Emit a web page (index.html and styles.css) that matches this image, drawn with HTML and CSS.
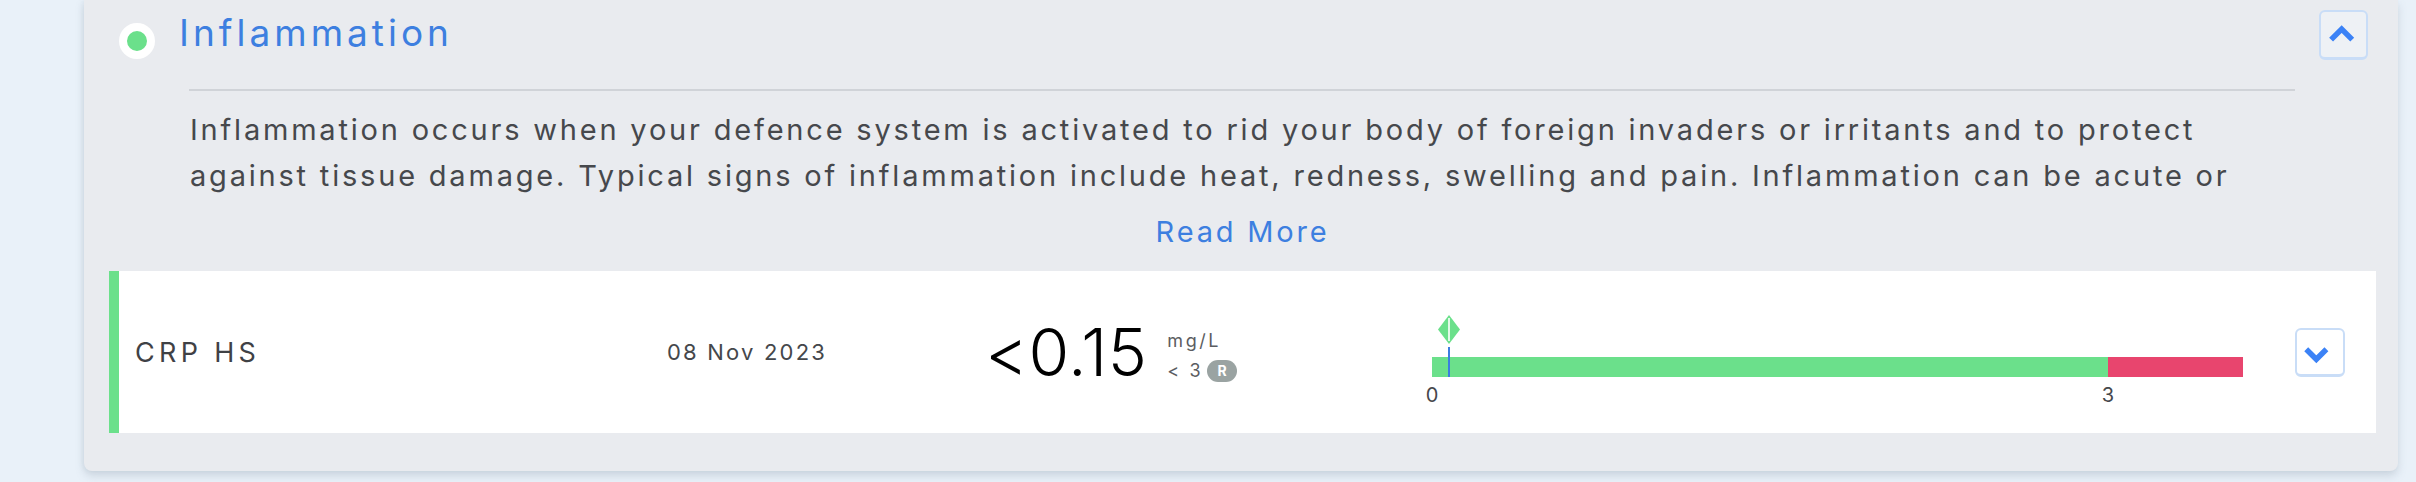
FILE: index.html
```html
<!DOCTYPE html>
<html lang="en">
<head>
    <meta charset="UTF-8">
    <meta name="viewport" content="width=device-width, initial-scale=1.0">
    <title>Inflammation</title>
    <link rel="stylesheet" href="styles.css">
</head>
<body>

    <section class="panel">
        <header class="panel-head">
            <span class="status-dot"></span>
            <h2 class="panel-title">Inflammation</h2>
            <button class="toggle toggle-up" type="button">
                <svg viewBox="0 0 49 50" width="45" height="46"><polyline points="11,30 22.5,18.5 34,30" /></svg>
            </button>
        </header>

        <hr class="divider">

        <p class="desc">Inflammation occurs when your defence system is activated to rid your body of foreign invaders or irritants and to protect against tissue damage. Typical signs of inflammation include heat, redness, swelling and pain. Inflammation can be acute or</p>
        <a class="read-more" href="#">Read More</a>

        <div class="marker-row">
            <div class="m-name">CRP HS</div>
            <div class="m-date">08 Nov 2023</div>
            <div class="m-value">
                <span class="val">&lt;0.15</span>
                <div class="units">
                    <span class="unit">mg/L</span>
                    <span class="range">&lt; 3 <span class="badge">R</span></span>
                </div>
            </div>
            <div class="m-chart">
                <div class="scale">
                    <svg class="pin" style="left: 2.1%" viewBox="0 0 22 29" width="22" height="29">
                        <polygon points="11,0 22,14.5 11,29 0,14.5" fill="#6be08b" />
                        <line x1="11" y1="3" x2="11" y2="26" stroke="#fff" stroke-width="1.6" />
                    </svg>
                    <span class="needle" style="left: 2.1%"></span>
                    <div class="bar">
                        <span class="seg seg-ok" style="width: 83.35%"></span>
                        <span class="seg seg-high" style="width: 16.65%"></span>
                    </div>
                    <div class="ticks">
                        <span class="tick" style="left: 0%">0</span>
                        <span class="tick" style="left: 83.35%">3</span>
                    </div>
                </div>
            </div>
            <button class="toggle toggle-down" type="button">
                <svg viewBox="0 0 50 49" width="46" height="45"><polyline points="10,22 21,33 32,22" /></svg>
            </button>
        </div>
    </section>

</body>
</html>
```

FILE: styles.css
```css
body {
    margin: 0;
    height: 482px;
    overflow: hidden;
    background-color: #e9f1f9;
    font-family: Inter, "Open Sans", sans-serif;
}

.panel {
    margin-left: 84px;
    width: 2314px;
    padding: 0 22px 38px 25px;
    box-sizing: border-box;
    background-color: #e9ebef;
    border-radius: 0 0 8px 8px;
    box-shadow: 0 5px 8px rgba(120, 135, 150, 0.25), -2px 0 4px rgba(120, 135, 150, 0.08);
}

/* header */
.panel-head {
    display: flex;
    align-items: flex-start;
    padding: 8px 8px 0 10px;
}

.status-dot {
    width: 20px;
    height: 20px;
    margin-top: 15px;
    border: 8px solid #ffffff;
    border-radius: 50%;
    background-color: #6be08b;
    flex-shrink: 0;
}

.panel-title {
    margin: 0 0 0 24px;
    font-size: 37px;
    line-height: 50px;
    font-weight: 400;
    letter-spacing: 4px;
    color: #3d7fe0;
    flex: 1;
}

.toggle {
    display: flex;
    align-items: center;
    justify-content: center;
    padding: 0;
    background-color: #eef1f5;
    border: 2px solid #c9ddf7;
    border-bottom-width: 3px;
    border-radius: 6px;
    cursor: pointer;
}

.toggle svg polyline {
    fill: none;
    stroke: #3b82f6;
    stroke-width: 6;
}

.toggle-up {
    width: 49px;
    height: 50px;
    margin-top: 2px;
}

.divider {
    height: 2px;
    margin: 29px 81px 0 80px;
    border: none;
    background-color: #d0d3d8;
}

.desc {
    height: 92px;
    margin: 16px 103px 0 81px;
    overflow: hidden;
    font-size: 29px;
    line-height: 46px;
    letter-spacing: 2.8px;
    color: #46484c;
}

.read-more {
    display: block;
    margin-top: 13px;
    text-align: center;
    font-size: 29px;
    line-height: 40px;
    letter-spacing: 2.8px;
    color: #3d7fe0;
    text-decoration: none;
}

/* marker row */
.marker-row {
    display: flex;
    align-items: center;
    height: 162px;
    margin-top: 19px;
    padding: 0 30px 0 16px;
    background-color: #ffffff;
    border-left: 10px solid #6be08b;
}

.m-name {
    width: 532px;
    font-size: 27px;
    letter-spacing: 4.3px;
    color: #3f4145;
}

.m-date {
    width: 322px;
    font-size: 22px;
    letter-spacing: 2.2px;
    color: #45474b;
}

.m-value {
    display: flex;
    align-items: center;
    width: 443px;
}

.val {
    margin-left: -4px;
    font-size: 66px;
    font-weight: 300;
    letter-spacing: 0.4px;
    color: #000000;
}

.units {
    display: flex;
    flex-direction: column;
    gap: 9px;
    margin: 8px 0 0 20px;
    font-size: 18px;
    line-height: 20px;
    letter-spacing: 2.6px;
    color: #5b5d61;
}

.range {
    display: flex;
    align-items: center;
    gap: 4px;
}

.badge {
    display: inline-block;
    width: 30px;
    height: 22px;
    border-radius: 11px;
    background-color: #9aa3a2;
    color: #ffffff;
    font-size: 14px;
    font-weight: 700;
    line-height: 22px;
    text-align: center;
    letter-spacing: 0;
}

.m-chart {
    width: 811px;
    align-self: flex-start;
    margin-top: 44px;
}

.scale {
    position: relative;
    padding-top: 42px;
}

.pin {
    position: absolute;
    top: 0;
    margin-left: -11px;
}

.needle {
    position: absolute;
    top: 32px;
    width: 2px;
    height: 30px;
    margin-left: -1px;
    background-color: #3b7de0;
}

.bar {
    display: flex;
    height: 20px;
}

.seg-ok {
    background-color: #6be08b;
}

.seg-high {
    background-color: #e8456e;
}

.ticks {
    position: relative;
    height: 20px;
    margin-top: 8px;
}

.tick {
    position: absolute;
    top: 0;
    transform: translateX(-50%);
    font-size: 20px;
    line-height: 20px;
    color: #46484c;
}

.toggle-down {
    width: 50px;
    height: 49px;
    margin-left: 52px;
    background-color: #ffffff;
}
```
